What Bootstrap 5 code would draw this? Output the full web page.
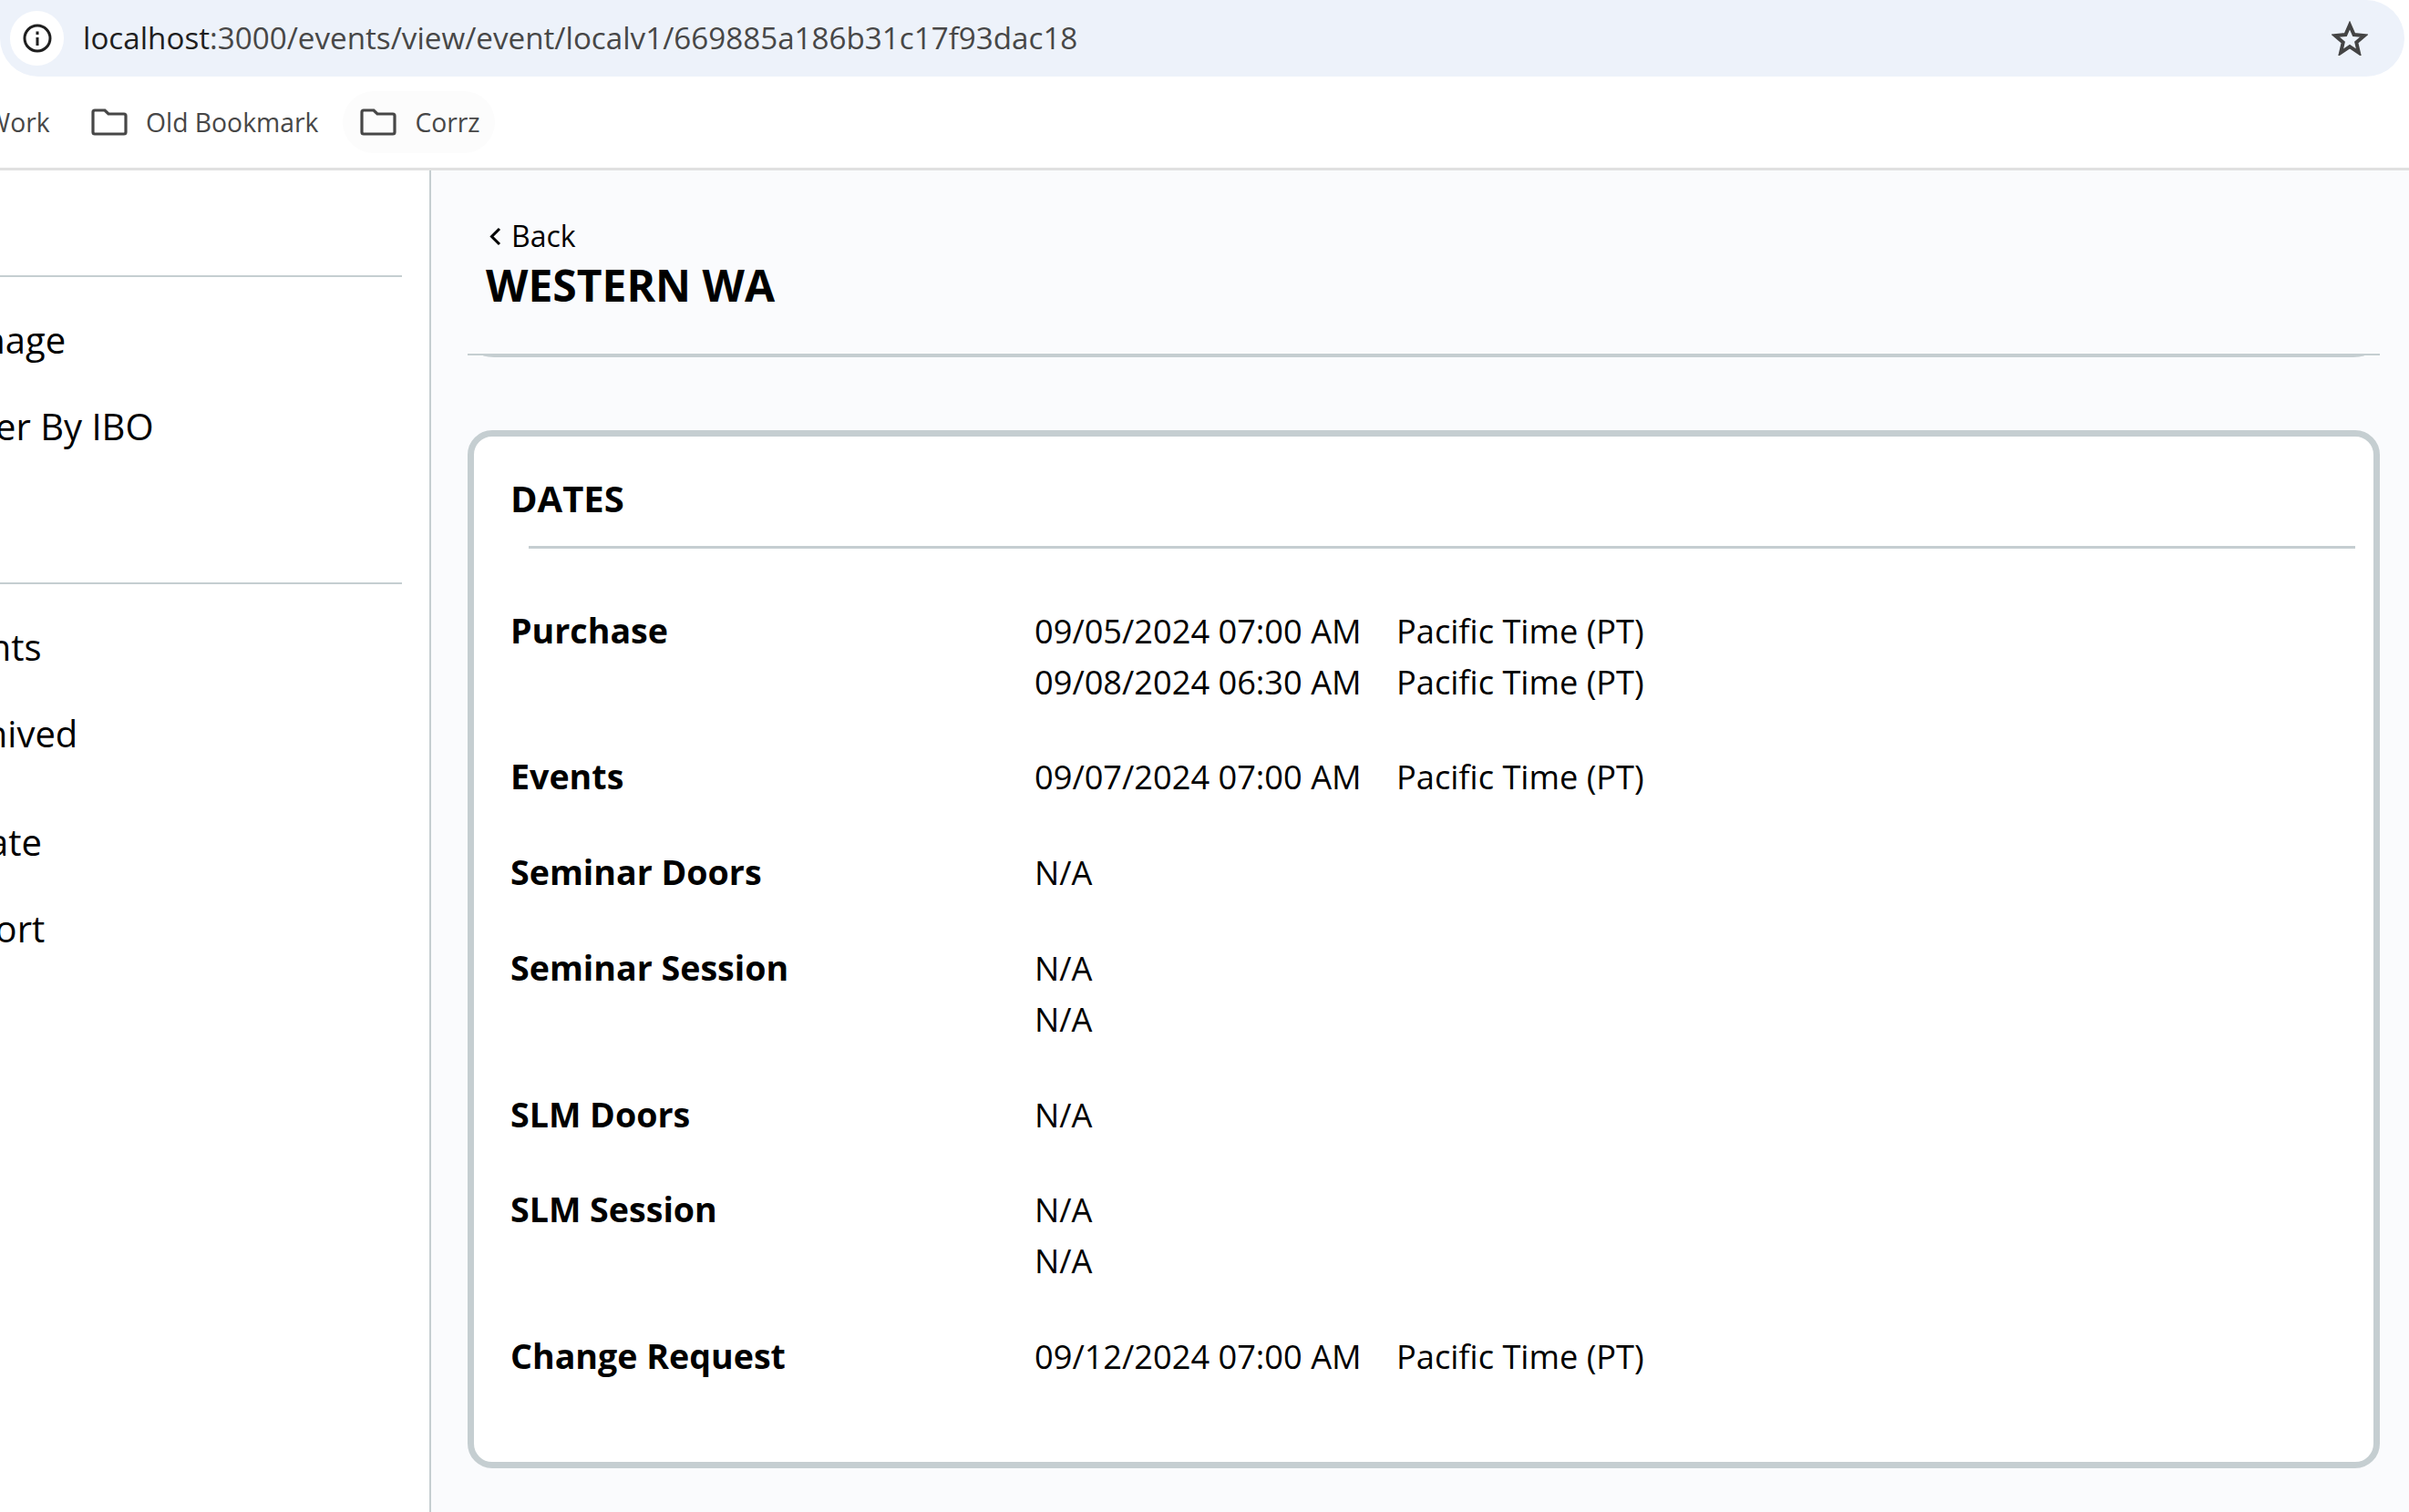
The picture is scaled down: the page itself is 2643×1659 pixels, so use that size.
<!DOCTYPE html>
<html lang="en">
<head>
    <meta charset="UTF-8">
    <title>WESTERN WA</title>
    <link href="https://cdn.jsdelivr.net/npm/bootstrap@5.3.0/dist/css/bootstrap.min.css" rel="stylesheet">
    <style>
        html, body {
            height: 100%;
        }
        body {
            font-family: "Open Sans", "Noto Sans", sans-serif;
            color: #000;
            background: #fff;
            overflow: hidden;
        }
        .page-shell {
            width: 2643px;
            height: 1659px;
            overflow: hidden;
        }
        /* browser chrome */
        .url-bar {
            height: 84px;
            width: 2638px;
            background: #edf2fa;
            border-radius: 0 42px 42px 42px;
            padding-left: 11px;
            padding-right: 40px;
        }
        .info-pill {
            width: 59px;
            height: 60px;
            border-radius: 30px;
            background: #fff;
        }
        .url-text {
            margin-left: 21px;
            font-size: 33.2px;
            color: #474747;
            white-space: nowrap;
        }
        .url-text b {
            font-weight: 400;
            color: #1f1f1f;
        }
        .bookmark-bar {
            height: 103px;
            border-bottom: 3px solid #e0e0e0;
            font-size: 28.3px;
            color: #474747;
            white-space: nowrap;
            overflow: hidden;
            gap: 11px;
        }
        .bookmark-cut {
            margin-left: -15px;
            width: 85px;
            flex: none;
        }
        .bookmark-item {
            height: 68px;
            padding: 0 16px 0 19px;
            border-radius: 34px;
            gap: 20px;
        }
        .bookmark-hover {
            background: #fcfcfc;
        }
        /* app */
        .app-body {
            height: calc(1659px - 187px);
        }
        .side-panel {
            width: 473px;
            flex: none;
            border-right: 2px solid #c5ced1;
            overflow: hidden;
            font-size: 40px;
            white-space: nowrap;
            padding-top: 115px;
        }
        .side-rule {
            width: 441px;
            height: 2px;
            background: #c5ced1;
            margin: 0;
            border: 0;
            opacity: 1;
        }
        .side-group {
            padding-top: 22px;
        }
        .side-group-spaced {
            margin-bottom: 124px;
        }
        .side-group-gap {
            margin-bottom: 25px;
        }
        .side-link {
            display: block;
            height: 94.5px;
            line-height: 94.5px;
            margin-left: -77px;
            color: #000;
            text-decoration: none;
        }
        .main-panel {
            flex: 1;
            background: #fafbfd;
            padding: 0 32px 0 40px;
        }
        .back-link {
            font-size: 32px;
            color: #000;
            text-decoration: none;
            margin-left: 23px;
            margin-top: 51px;
            height: 42px;
            gap: 11px;
        }
        .event-title {
            font-size: 48px;
            font-weight: 700;
            margin: 0 0 0 20px;
            line-height: 66px;
        }
        .title-rule {
            margin-top: 42px;
            height: 2px;
            background: #c5ced1;
        }
        .title-rule div {
            height: 4px;
            margin: 0 17px;
            background: #c5ced1;
            border-radius: 0 0 20px 20px / 0 0 2px 2px;
        }
        .dates-card {
            margin-top: 82px;
            height: 1139px;
            background: #fff;
            border: 7px solid #c5ced1;
            border-radius: 27px;
            padding: 0 20px 0 40px;
        }
        .dates-title {
            font-size: 40px;
            font-weight: 700;
            line-height: 56px;
            margin: 40px 0 0 0;
        }
        .dates-rule {
            height: 3px;
            background: #c5ced1;
            margin: 24px 0 0 20px;
        }
        .dates-list {
            margin-top: 62px;
        }
        .date-row {
            margin-bottom: 48.4px;
        }
        .date-label {
            width: 575px;
            flex: none;
            font-size: 37.6px;
            font-weight: 700;
            line-height: 56px;
        }
        .date-values {
            padding-top: 1px;
        }
        .date-line {
            font-size: 36.2px;
            line-height: 55.5px;
        }
        .date-time {
            width: 397px;
            flex: none;
        }
    </style>
</head>
<body>
    <div class="page-shell d-flex flex-column">
        <!-- Browser address bar -->
        <div class="url-bar d-flex align-items-center">
            <div class="info-pill d-flex align-items-center justify-content-center flex-shrink-0">
                <svg width="32" height="32" viewBox="0 0 32 32" fill="none" stroke="#1f1f1f" stroke-width="3">
                    <circle cx="16" cy="16" r="14"/>
                    <path d="M16 15v9M16 8.500v3.500"/>
                </svg>
            </div>
            <div class="url-text"><b>localhost</b>:3000/events/view/event/localv1/669885a186b31c17f93dac18</div>
            <svg class="ms-auto flex-shrink-0" width="40" height="38" viewBox="0 0 40 38" fill="none" stroke="#444" stroke-width="4">
                <path d="M20 4.500l4.600 10.600 11.400 1-8.700 7.500 2.600 11.200L20 28.200 10.100 34.800l2.600-11.200L4 16.100l11.400-1z"/>
            </svg>
        </div>

        <!-- Bookmarks -->
        <div class="bookmark-bar d-flex align-items-center">
            <span class="bookmark-cut">Work</span>
            <div class="bookmark-item d-flex align-items-center">
                <svg width="40" height="30" viewBox="0 0 40 30" fill="none" stroke="#474747" stroke-width="3.200">
                    <path d="M2 4a2 2 0 0 1 2-2h11l4 4h17a2 2 0 0 1 2 2v18a2 2 0 0 1-2 2H4a2 2 0 0 1-2-2z"/>
                </svg>
                <span>Old Bookmark</span>
            </div>
            <div class="bookmark-item bookmark-hover d-flex align-items-center">
                <svg width="40" height="30" viewBox="0 0 40 30" fill="none" stroke="#474747" stroke-width="3.200">
                    <path d="M2 4a2 2 0 0 1 2-2h11l4 4h17a2 2 0 0 1 2 2v18a2 2 0 0 1-2 2H4a2 2 0 0 1-2-2z"/>
                </svg>
                <span>Corrz</span>
            </div>
        </div>

        <div class="app-body d-flex">
            <!-- Sidebar, cut off by the browser edge -->
            <nav class="side-panel">
                <hr class="side-rule">
                <div class="side-group side-group-spaced">
                    <a class="side-link" href="#">Manage</a>
                    <a class="side-link" href="#">Order By IBO</a>
                </div>
                <hr class="side-rule">
                <div class="side-group side-group-gap">
                    <a class="side-link" href="#">Events</a>
                    <a class="side-link" href="#">Archived</a>
                </div>
                <a class="side-link" href="#">Create</a>
                <a class="side-link" href="#">Report</a>
            </nav>

            <!-- Main content -->
            <main class="main-panel">
                <a class="back-link d-flex align-items-center" href="#">
                    <svg width="14" height="21" viewBox="0 0 14 21" fill="none" stroke="#000" stroke-width="3">
                        <path d="M12 2L3.500 10.500 12 19"/>
                    </svg>
                    <span>Back</span>
                </a>
                <h1 class="event-title">WESTERN WA</h1>
                <div class="title-rule"><div></div></div>

                <div class="dates-card">
                    <h2 class="dates-title">DATES</h2>
                    <div class="dates-rule"></div>
                    <div class="dates-list" id="datesList"></div>
                </div>
            </main>
        </div>
    </div>

    <script src="https://cdn.jsdelivr.net/npm/bootstrap@5.3.0/dist/js/bootstrap.bundle.min.js"></script>
    <script>
        const PT = 'Pacific Time (PT)';
        const rows = [
            ['Purchase', [['09/05/2024 07:00 AM', PT], ['09/08/2024 06:30 AM', PT]]],
            ['Events', [['09/07/2024 07:00 AM', PT]]],
            ['Seminar Doors', [['N/A']]],
            ['Seminar Session', [['N/A'], ['N/A']]],
            ['SLM Doors', [['N/A']]],
            ['SLM Session', [['N/A'], ['N/A']]],
            ['Change Request', [['09/12/2024 07:00 AM', PT]]]
        ];

        document.getElementById('datesList').innerHTML = rows.map(([label, lines]) => `
            <div class="date-row d-flex">
                <div class="date-label">${label}</div>
                <div class="date-values">
                    ${lines.map(([time, zone]) => `
                        <div class="date-line d-flex">
                            <span class="date-time">${time}</span>
                            ${zone ? `<span>${zone}</span>` : ''}
                        </div>`).join('')}
                </div>
            </div>`).join('');
    </script>
</body>
</html>
